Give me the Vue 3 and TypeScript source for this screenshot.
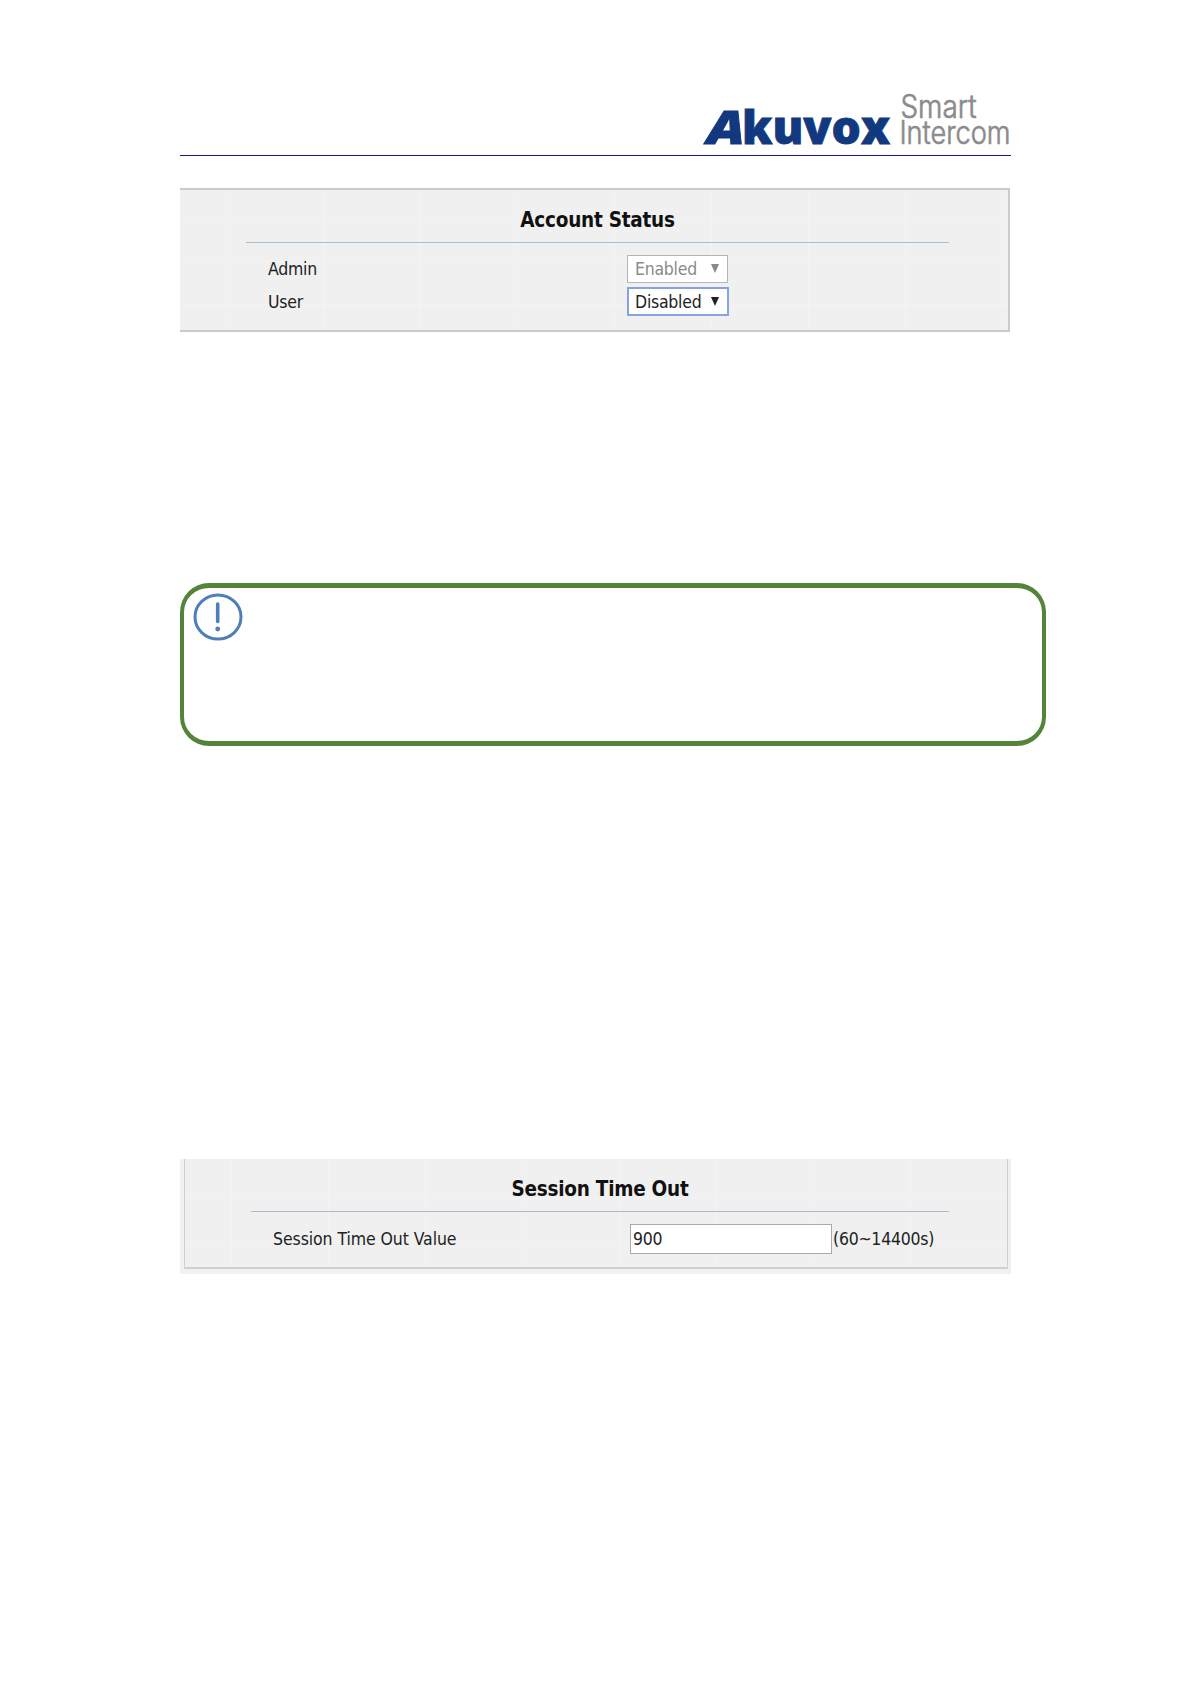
<script setup lang="ts">
import { ref } from 'vue'

const options = ['Enabled', 'Disabled']

const accounts = ref([
  { name: 'Admin', status: 'Enabled', locked: true },
  { name: 'User', status: 'Disabled', locked: false },
])

const sessionTimeOut = ref<string>('900')
</script>

<template>
  <main class="page">
    <header class="header">
      <svg class="logo" viewBox="0 0 310 60" role="img" aria-label="Akuvox Smart Intercom">
        <text class="brand" y="50.3"><tspan class="lead" x="6" textLength="38" lengthAdjust="spacingAndGlyphs">A</tspan><tspan x="41" textLength="148" lengthAdjust="spacingAndGlyphs">kuvox</tspan></text>
        <text class="tagline" x="199.5" y="24" textLength="76" lengthAdjust="spacingAndGlyphs">Smart</text>
        <text class="tagline" x="198.5" y="50.3" textLength="111" lengthAdjust="spacingAndGlyphs">Intercom</text>
      </svg>
    </header>

    <section class="panel account">
      <h2 class="title">Account Status</h2>
      <div v-for="account in accounts" :key="account.name" class="row">
        <label class="label">{{ account.name }}</label>
        <div class="select" :class="{ locked: account.locked }">
          <select v-model="account.status" :disabled="account.locked">
            <option v-for="option in options" :key="option">{{ option }}</option>
          </select>
          <svg class="arrow" viewBox="0 0 8 9"><path d="M0 0h8L4 9z" /></svg>
        </div>
      </div>
    </section>

    <section class="note">
      <svg class="note-icon" viewBox="0 0 50 48">
        <ellipse cx="25" cy="24" rx="23" ry="22" />
        <path d="M24.7 11v17.5" />
        <circle cx="24.7" cy="36" r="2.4" />
      </svg>
    </section>

    <section class="session">
      <div class="panel session-inner">
        <h2 class="title">Session Time Out</h2>
        <div class="row">
          <label class="label">Session Time Out Value</label>
          <input v-model="sessionTimeOut" class="input" type="text" />
          <span class="hint">(60~14400s)</span>
        </div>
      </div>
    </section>
  </main>
</template>

<style>
body {
  margin: 0;
  background: #fff;
}
</style>

<style scoped>
.page {
  box-sizing: border-box;
  width: 1191px;
  height: 1684px;
  padding: 94px 0 0 180px;
  font-family: "DejaVu Sans Condensed", "DejaVu Sans", sans-serif;
  font-stretch: condensed;
  font-size: 17.5px;
  letter-spacing: -0.25px;
  color: #222;
}

.header {
  display: flex;
  justify-content: flex-end;
  width: 831px;
  height: 61px;
  border-bottom: 1px solid #17128a;
}

.logo {
  width: 310px;
  height: 60px;
  overflow: visible;
}

.brand {
  font-family: "Open Sans", sans-serif;
  font-stretch: normal;
  font-size: 46.5px;
  font-weight: 800;
  letter-spacing: 0;
  fill: #12397f;
  stroke: #12397f;
  stroke-width: 0.8;
}

.lead {
  font-style: italic;
}

.tagline {
  font-family: Inter, sans-serif;
  font-stretch: normal;
  font-size: 32px;
  font-weight: 300;
  letter-spacing: 0;
  fill: #8b8b8b;
  stroke: #8b8b8b;
  stroke-width: 0.7;
}

.panel {
  box-sizing: border-box;
  background-color: #f0f0f0;
  background-image:
    repeating-linear-gradient(90deg, transparent 0 46px, rgba(255, 255, 255, 0.22) 46px 47px, transparent 47px 97px),
    repeating-linear-gradient(0deg, transparent 0 25px, rgba(255, 255, 255, 0.2) 25px 26px, transparent 26px 43px);
}

.account {
  width: 830px;
  height: 144px;
  margin-top: 32px;
  padding: 0 59px 0 66px;
  border: solid #cbcbcb;
  border-width: 2px 2px 2px 0;
}

.title {
  box-sizing: border-box;
  height: 53px;
  margin: 0;
  padding-top: 17px;
  border-bottom: 1px solid #a9bdce;
  font-size: 20.5px;
  letter-spacing: -0.25px;
  line-height: 26px;
  font-weight: bold;
  text-align: center;
  color: #111;
}

.row {
  display: flex;
  align-items: center;
  height: 33px;
}

.account .title + .row {
  margin-top: 9px;
}

.label {
  width: 359px;
  padding-left: 22px;
}

.select {
  display: flex;
  align-items: center;
  box-sizing: border-box;
  width: 102px;
  height: 29px;
  border: 2px solid #86a4df;
  background: #fff;
  color: #222;
}

.select.locked {
  width: 101px;
  height: 28px;
  border: 1px solid #b5b5b5;
  padding-left: 1px;
  color: #8a8a8a;
}

.select select {
  width: 79px;
  height: 24px;
  padding: 0 0 0 6px;
  border: 0;
  outline: 0;
  appearance: none;
  background: transparent;
  color: inherit;
  font: inherit;
  letter-spacing: inherit;
  opacity: 1;
}

.arrow {
  width: 8px;
  height: 9px;
  margin-left: 3px;
  fill: currentColor;
}

.note {
  box-sizing: border-box;
  width: 866px;
  height: 163px;
  margin-top: 251px;
  padding: 5px 0 0 9px;
  border: solid #54833a;
  border-width: 5px 4px;
  border-radius: 29px;
}

.note-icon {
  display: block;
  width: 50px;
  height: 48px;
  fill: none;
  stroke: #4e7fb9;
  stroke-width: 3;
}

.note-icon path {
  stroke-width: 3.6;
  stroke-linecap: round;
}

.note-icon circle {
  fill: #4e7fb9;
  stroke: none;
}

.session {
  box-sizing: border-box;
  width: 831px;
  height: 115px;
  margin-top: 413px;
  padding: 0 3px 5px 4px;
  background: #f1f1f1;
}

.session-inner {
  height: 110px;
  padding: 0 58px 0 66px;
  border: solid #cfcfd3;
  border-width: 0 1px 2px;
}

.session .title {
  border-color: #adb8d0;
}

.session .row {
  height: 30px;
  margin-top: 12px;
}

.session .label {
  width: 357px;
  letter-spacing: -0.08px;
}

.input {
  box-sizing: border-box;
  width: 202px;
  height: 30px;
  padding: 0 2px;
  border: 1px solid #aaa;
  outline: 0;
  background: #fff;
  color: #222;
  font: inherit;
  letter-spacing: inherit;
}

.hint {
  margin-left: 1px;
}
</style>
